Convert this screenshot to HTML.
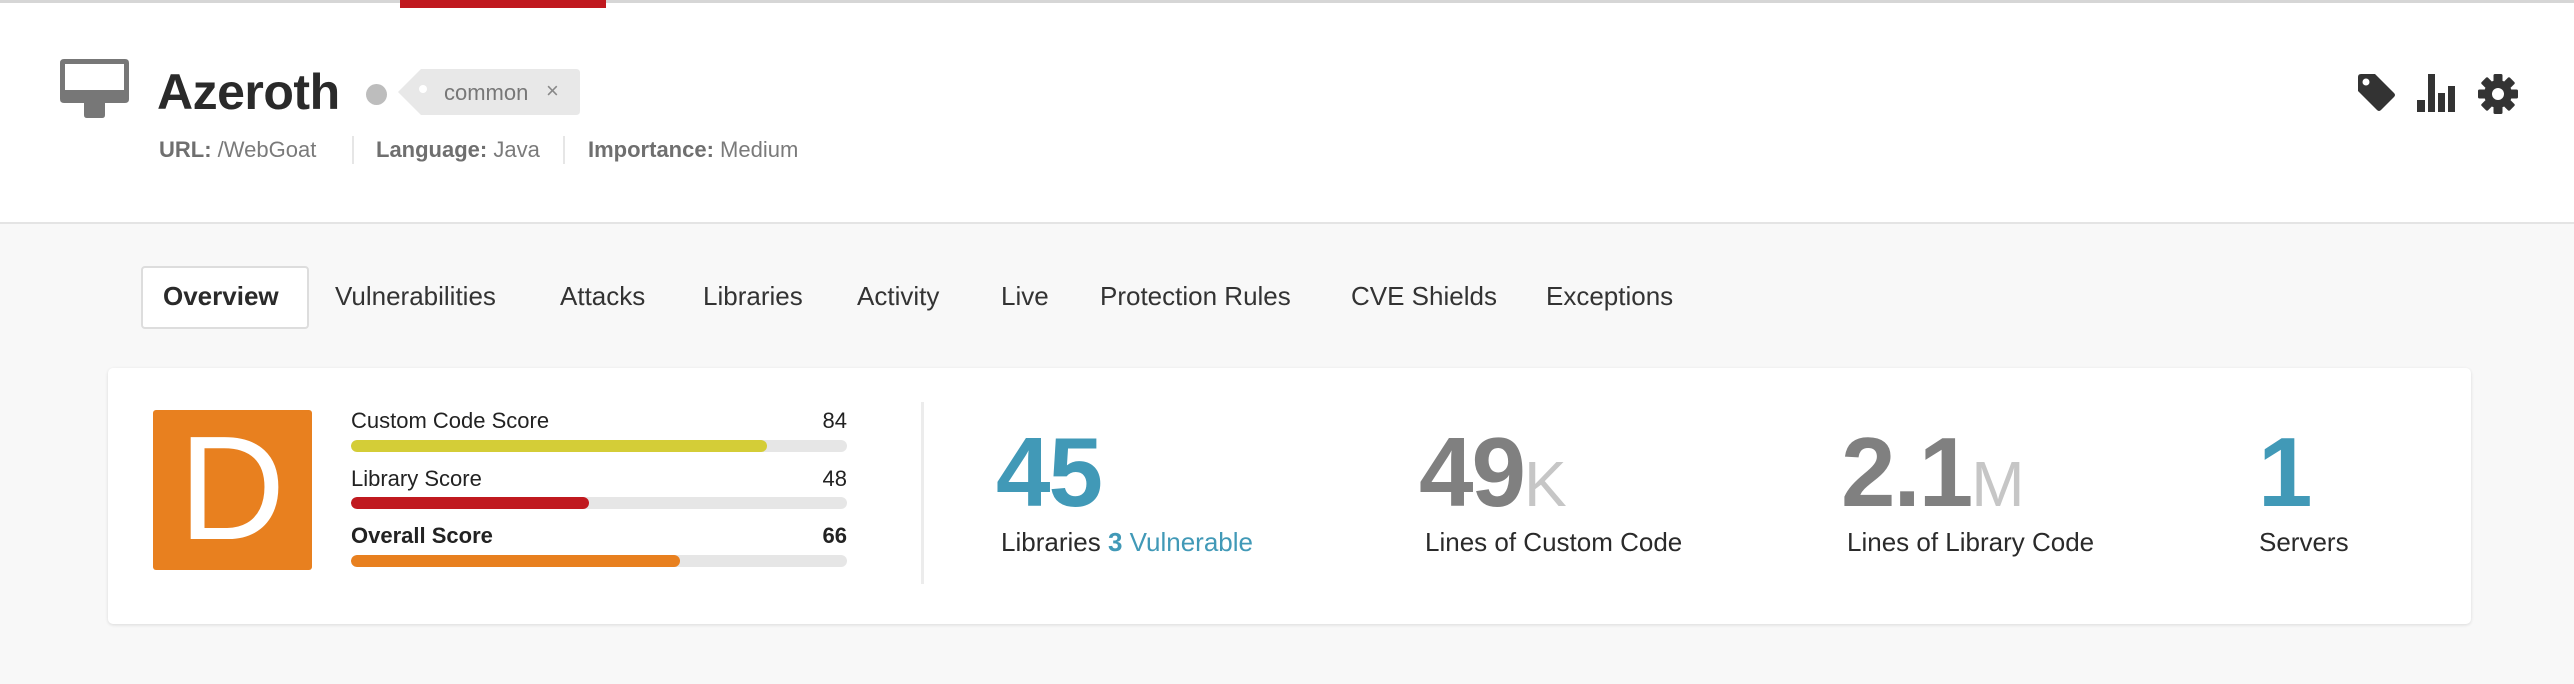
<!DOCTYPE html>
<html><head><meta charset="utf-8"><style>
*{margin:0;padding:0;box-sizing:border-box}
body{width:2574px;height:684px;overflow:hidden;background:#f8f8f8;font-family:"Liberation Sans",sans-serif;position:relative}
.a{position:absolute;white-space:nowrap}
.hdr{position:absolute;left:0;top:0;width:2574px;height:224px;background:#fff;border-bottom:2px solid #e4e4e4;border-top:3px solid #d6d6d6}
.tab{position:absolute;top:278px;font-size:26px;color:#333;line-height:36px}
.meta{top:136px;font-size:22px;color:#7a7a7a;line-height:28px}
.meta b{color:#6f6f6f}
.sep{position:absolute;top:136px;width:2px;height:28px;background:#e6e6e6}
.lbl{font-size:22px;color:#222;line-height:26px}
.bar{position:absolute;left:351px;width:496px;height:12px;border-radius:6px;background:#e6e6e6;overflow:hidden}
.bar i{position:absolute;left:0;top:0;height:12px;border-radius:6px}
.big{font-size:98px;font-weight:bold;line-height:98px;letter-spacing:-2px}
.sm{font-size:64px;font-weight:normal;color:#c6c6c6;letter-spacing:0}
.cap{font-size:26px;color:#2a2a2a;line-height:30px}
</style></head><body>
<div class="hdr"></div>
<div class="a" style="left:400px;top:0;width:206px;height:8px;background:#c0191f"></div>

<svg class="a" style="left:60px;top:59px" width="70" height="60" viewBox="0 0 70 60">
<path d="M4 0H65Q69 0 69 4V40Q69 44 65 44H4Q0 44 0 40V4Q0 0 4 0ZM5 5V31H64V5Z" fill="#777"/>
<path d="M24 44H45V56Q45 59 42 59H27Q24 59 24 56Z" fill="#777"/>
</svg>
<div class="a" style="left:157px;top:62px;font-size:50px;font-weight:bold;color:#2a2a2a;line-height:60px;letter-spacing:-0.5px">Azeroth</div>
<div class="a" style="left:366px;top:84px;width:21px;height:21px;border-radius:50%;background:#bdbdbd"></div>
<svg class="a" style="left:398px;top:69px" width="183" height="47" viewBox="0 0 183 47">
<path d="M23 0H178Q182 0 182 4V42Q182 46 178 46H23L0 23Z" fill="#e8e8e8"/>
<circle cx="25" cy="20" r="4" fill="#fff"/>
</svg>
<div class="a" style="left:444px;top:78px;font-size:22px;color:#777;line-height:30px">common</div>
<div class="a" style="left:546px;top:76px;font-size:22px;color:#888;line-height:30px">×</div>

<div class="a meta" style="left:159px"><b>URL:</b> /WebGoat</div>
<div class="sep" style="left:352px"></div>
<div class="a meta" style="left:376px"><b>Language:</b> Java</div>
<div class="sep" style="left:563px"></div>
<div class="a meta" style="left:588px"><b>Importance:</b> Medium</div>

<svg class="a" style="left:2358px;top:74px" width="38" height="38" viewBox="0 0 38 38">
<path d="M3 0H17L36 19Q38 21 36 23L23 36Q21 38 19 36L0 17V3Q0 0 3 0Z" fill="#333"/>
<circle cx="8" cy="8" r="3.5" fill="#fff"/>
</svg>
<svg class="a" style="left:2417px;top:74px" width="40" height="40" viewBox="0 0 40 40">
<rect x="0" y="26" width="8" height="12" fill="#333"/><rect x="11" y="0" width="7" height="38" fill="#333"/>
<rect x="21" y="19" width="7" height="19" fill="#333"/><rect x="31" y="12" width="7" height="26" fill="#333"/>
</svg>
<svg class="a" style="left:2478px;top:74px" width="40" height="40" viewBox="-20 -20 40 40">
<g fill="#333"><circle r="14"/>
<rect x="-4.5" y="-20" width="9" height="40" rx="1.5"/>
<rect x="-4.5" y="-20" width="9" height="40" rx="1.5" transform="rotate(45)"/>
<rect x="-4.5" y="-20" width="9" height="40" rx="1.5" transform="rotate(90)"/>
<rect x="-4.5" y="-20" width="9" height="40" rx="1.5" transform="rotate(135)"/></g>
<circle r="6" fill="#fff"/>
</svg>

<div class="a" style="left:141px;top:266px;width:168px;height:63px;border:2px solid #ddd;border-radius:4px;background:#fff"></div>
<div class="tab" style="left:163px;font-weight:bold;color:#2a2a2a">Overview</div>
<div class="tab" style="left:335px">Vulnerabilities</div>
<div class="tab" style="left:560px">Attacks</div>
<div class="tab" style="left:703px">Libraries</div>
<div class="tab" style="left:857px">Activity</div>
<div class="tab" style="left:1001px">Live</div>
<div class="tab" style="left:1100px">Protection Rules</div>
<div class="tab" style="left:1351px">CVE Shields</div>
<div class="tab" style="left:1546px">Exceptions</div>

<div class="a" style="left:108px;top:368px;width:2363px;height:256px;background:#fff;border-radius:5px;box-shadow:0 1px 3px rgba(0,0,0,.12)"></div>
<div class="a" style="left:153px;top:410px;width:159px;height:160px;background:#e8801f;border-radius:3px"></div>
<div class="a" style="left:172px;top:414px;width:120px;text-align:center;font-size:148px;color:#fff;line-height:150px">D</div>

<div class="a lbl" style="left:351px;top:408px">Custom Code Score</div>
<div class="a lbl" style="left:747px;top:408px;width:100px;text-align:right">84</div>
<div class="bar" style="top:440px"><i style="width:416px;background:#d4cd37"></i></div>
<div class="a lbl" style="left:351px;top:466px">Library Score</div>
<div class="a lbl" style="left:747px;top:466px;width:100px;text-align:right">48</div>
<div class="bar" style="top:497px"><i style="width:238px;background:#c0191f"></i></div>
<div class="a lbl" style="left:351px;top:523px;font-weight:bold">Overall Score</div>
<div class="a lbl" style="left:747px;top:523px;width:100px;text-align:right;font-weight:bold">66</div>
<div class="bar" style="top:555px"><i style="width:329px;background:#e8801f"></i></div>

<div class="a" style="left:921px;top:402px;width:3px;height:182px;background:#ececec"></div>

<div class="a big" style="left:996px;top:423px;color:#4199b7">45</div>
<div class="a cap" style="left:1001px;top:527px">Libraries <span style="color:#4199b7"><b>3</b> Vulnerable</span></div>
<div class="a big" style="left:1419px;top:423px;color:#808080">49<span class="sm">K</span></div>
<div class="a cap" style="left:1425px;top:527px">Lines of Custom Code</div>
<div class="a big" style="left:1841px;top:423px;color:#808080">2.1<span class="sm">M</span></div>
<div class="a cap" style="left:1847px;top:527px">Lines of Library Code</div>
<div class="a big" style="left:2258px;top:423px;color:#4199b7">1</div>
<div class="a cap" style="left:2259px;top:527px">Servers</div>
</body></html>
